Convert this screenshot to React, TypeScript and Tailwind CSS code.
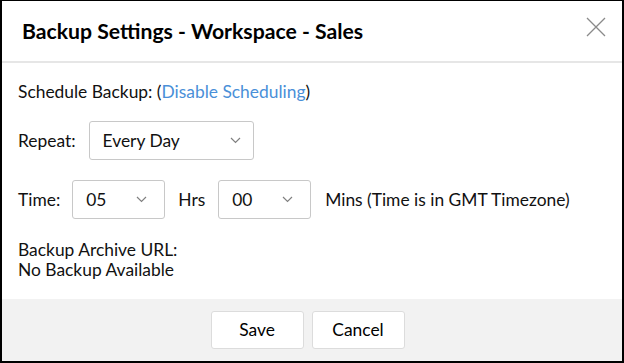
function Chevron() {
  return (
    <svg width="11" height="7" viewBox="0 0 11 7" fill="none" className="shrink-0">
      <path d="M1 1l4.5 4.5L10 1" stroke="#808080" strokeWidth="1.2" />
    </svg>
  )
}

function SelectBox({ value, width, chevronRight }: { value: string; width: string; chevronRight: string }) {
  return (
    <div
      className={`flex items-center justify-between h-[39px] ${width} pl-[13px] ${chevronRight} border border-[#c8c8c8] rounded-[3px] bg-white`}
    >
      <span>{value}</span>
      <Chevron />
    </div>
  )
}

export default function App() {
  return (
    <div
      className="w-[624px] h-[363px] flex flex-col bg-white border-l-2 border-r-2 border-t border-b-2 border-black text-[17.4px] text-[#111] leading-[20px]"
      style={{ fontFamily: "Lato, 'Liberation Sans', sans-serif" }}
    >
      <header className="h-[62px] shrink-0 flex items-center justify-between pl-5 pr-[16px] border-b-2 border-[#e6e6e6]">
        <h1 className="text-[21.2px] font-bold text-black">Backup Settings - Workspace - Sales</h1>
        <svg width="20" height="20" viewBox="0 0 20 20" className="mb-[9px]">
          <path d="M1 1L19 19M19 1L1 19" stroke="#8a8a8a" strokeWidth="1.3" />
        </svg>
      </header>

      <div className="flex-1 flex flex-col pl-4 pt-[19px]">
        <p>
          Schedule Backup: (<span className="text-[#4a8fd8]">Disable Scheduling</span>)
        </p>

        <div className="flex items-center mt-[19px]">
          <span className="mr-[13px]">Repeat:</span>
          <SelectBox value="Every Day" width="w-[165px]" chevronRight="pr-[12px]" />
        </div>

        <div className="flex items-center mt-[20px]">
          <span className="mr-[12px]">Time:</span>
          <SelectBox value="05" width="w-[93px]" chevronRight="pr-[17px]" />
          <span className="mx-[13px]">Hrs</span>
          <SelectBox value="00" width="w-[93px]" chevronRight="pr-[17px]" />
          <span className="ml-[14px]">Mins (Time is in GMT Timezone)</span>
        </div>

        <div className="mt-[21px]">
          <p>Backup Archive URL:</p>
          <p>No Backup Available</p>
        </div>
      </div>

      <footer className="h-[62px] shrink-0 flex items-center justify-center gap-2 pr-[9px] bg-[#f2f2f2]">
        <button className="w-[93px] h-[38px] bg-white border border-[#dcdcdc] rounded-[3px] text-black">Save</button>
        <button className="w-[93px] h-[38px] bg-white border border-[#dcdcdc] rounded-[3px] text-black">Cancel</button>
      </footer>
    </div>
  )
}
